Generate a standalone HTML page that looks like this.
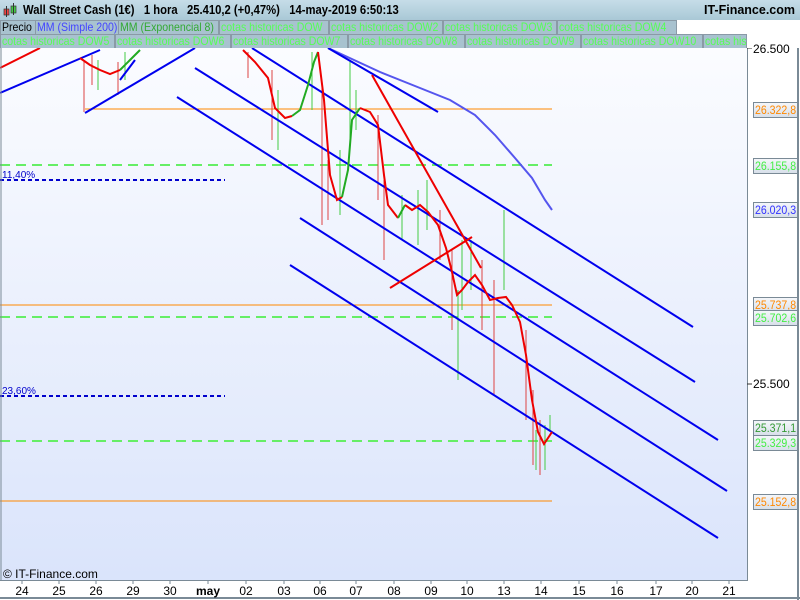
<!DOCTYPE html>
<html><head><meta charset="utf-8"><style>
body{margin:0;width:800px;height:600px;overflow:hidden;font-family:"Liberation Sans",sans-serif;background:#fff;position:relative}
#hdr{position:absolute;left:0;top:0;width:800px;height:20px;background:linear-gradient(#c6dde8,#a9c8d6);font-weight:bold;font-size:12.5px;line-height:20px}
.leg{position:absolute;height:13px;border:1px solid #8a9aa6;background:#a8c2cf;font-size:12px;line-height:13px;padding:0 1px;white-space:nowrap;color:#5f5;overflow:hidden}
.leg span,.pb span{display:inline-block;transform:scaleX(.88);transform-origin:0 0}
#plot{position:absolute;left:0;top:48px;width:747px;height:532px;background:linear-gradient(#fbfcff,#dae4fb);border-right:1px solid #7a8a96;border-bottom:1px solid #7a8a96}
.pb{position:absolute;left:753px;width:42px;height:14px;border:1px solid #7a8a96;background:linear-gradient(#f4f6fa,#d8e0ea);font-size:12px;line-height:14px;padding-left:1px;overflow:hidden;white-space:nowrap}
.xl{position:absolute;top:584px;font-size:12px;transform:translateX(-50%)}
</style></head><body>
<div id="hdr"><svg style="position:absolute;left:3px;top:3px" width="14" height="15"><rect x="1" y="6" width="5" height="6" fill="#e44" stroke="#333" stroke-width=".7"/><line x1="3.5" y1="3" x2="3.5" y2="14" stroke="#333"/><rect x="8" y="3" width="5" height="7" fill="#4c4" stroke="#333" stroke-width=".7"/><line x1="10.5" y1="0" x2="10.5" y2="12" stroke="#333"/></svg><span style="position:absolute;left:23px;transform:scaleX(.9);transform-origin:0 0;white-space:nowrap">Wall Street Cash (1€)&nbsp;&nbsp;&nbsp;1 hora&nbsp;&nbsp;&nbsp;25.410,2 (+0,47%)&nbsp;&nbsp;&nbsp;14-may-2019 6:50:13</span><span style="position:absolute;right:5px">IT-Finance.com</span></div>
<div class="leg" style="left:0;top:20px;color:#000;width:33px"><span>Precio</span></div>
<div class="leg" style="left:35px;top:20px;color:#44f;width:81px"><span>MM (Simple 200)</span></div>
<div class="leg" style="left:118px;top:20px;color:#3a3;width:97px"><span>MM (Exponencial 8)</span></div>
<div class="leg" style="left:219px;top:20px;width:106px"><span>cotas historicas DOW</span></div>
<div class="leg" style="left:329px;top:20px;width:110px"><span>cotas historicas DOW2</span></div>
<div class="leg" style="left:443px;top:20px;width:110px"><span>cotas historicas DOW3</span></div>
<div class="leg" style="left:557px;top:20px;width:116px"><span>cotas historicas DOW4</span></div>
<div class="leg" style="left:0;top:34px;width:111px"><span>cotas historicas DOW5</span></div>
<div class="leg" style="left:115px;top:34px;width:112px"><span>cotas historicas DOW6</span></div>
<div class="leg" style="left:231px;top:34px;width:113px"><span>cotas historicas DOW7</span></div>
<div class="leg" style="left:348px;top:34px;width:113px"><span>cotas historicas DOW8</span></div>
<div class="leg" style="left:465px;top:34px;width:112px"><span>cotas historicas DOW9</span></div>
<div class="leg" style="left:581px;top:34px;width:118px"><span>cotas historicas DOW10</span></div>
<div class="leg" style="left:703px;top:34px;width:40px"><span>cotas his</span></div>
<div id="plot"></div>
<svg style="position:absolute;left:0;top:48px" width="800" height="552" viewBox="0 48 800 552">
<g stroke="#f80" stroke-width="1"><line x1="85" y1="109" x2="552" y2="109"/><line x1="0" y1="305" x2="552" y2="305"/><line x1="0" y1="501" x2="552" y2="501"/></g>
<g stroke="#6e6" stroke-width="2" stroke-dasharray="10,6"><line x1="0" y1="165" x2="552" y2="165"/><line x1="0" y1="317" x2="552" y2="317"/><line x1="0" y1="441" x2="552" y2="441"/></g>
<g stroke="#00c" stroke-width="2" stroke-dasharray="4,3"><line x1="0" y1="180" x2="225" y2="180"/><line x1="0" y1="396" x2="225" y2="396"/></g>
<text x="2" y="178" font-size="10" fill="#00c" font-family="Liberation Sans">11,40%</text>
<text x="2" y="394" font-size="10" fill="#00c" font-family="Liberation Sans">23,60%</text>
<g stroke-width="1">
<g stroke="#d44"><line x1="84" y1="60" x2="84" y2="112"/><line x1="92" y1="55" x2="92" y2="85"/><line x1="118" y1="62" x2="118" y2="95"/><line x1="248" y1="52" x2="248" y2="78"/><line x1="272" y1="70" x2="272" y2="140"/><line x1="322" y1="80" x2="322" y2="225"/><line x1="328" y1="160" x2="328" y2="220"/><line x1="378" y1="115" x2="378" y2="200"/><line x1="384" y1="180" x2="384" y2="260"/><line x1="440" y1="210" x2="440" y2="260"/><line x1="452" y1="250" x2="452" y2="330"/><line x1="482" y1="260" x2="482" y2="330"/><line x1="494" y1="280" x2="494" y2="395"/><line x1="526" y1="330" x2="526" y2="420"/><line x1="533" y1="390" x2="533" y2="465"/><line x1="540" y1="420" x2="540" y2="475"/></g>
<g stroke="#4c4"><line x1="98" y1="60" x2="98" y2="90"/><line x1="125" y1="52" x2="125" y2="80"/><line x1="278" y1="90" x2="278" y2="150"/><line x1="312" y1="52" x2="312" y2="110"/><line x1="340" y1="150" x2="340" y2="215"/><line x1="350" y1="60" x2="350" y2="140"/><line x1="356" y1="90" x2="356" y2="130"/><line x1="402" y1="195" x2="402" y2="240"/><line x1="418" y1="190" x2="418" y2="245"/><line x1="427" y1="180" x2="427" y2="230"/><line x1="458" y1="290" x2="458" y2="380"/><line x1="462" y1="240" x2="462" y2="310"/><line x1="471" y1="240" x2="471" y2="290"/><line x1="504" y1="210" x2="504" y2="290"/><line x1="536" y1="430" x2="536" y2="470"/><line x1="545" y1="425" x2="545" y2="470"/><line x1="550" y1="415" x2="550" y2="430"/></g>
</g>
<polyline fill="none" stroke="#55e" stroke-width="2" points="328,48 380,72 420,88 450,100 475,115 495,135 515,158 532,178 545,200 552,210"/>
<g stroke="#00e" stroke-width="2">
<line x1="0" y1="93" x2="100" y2="50"/><line x1="85" y1="113" x2="195" y2="48"/><line x1="120" y1="80" x2="135" y2="60"/>
<line x1="252" y1="48" x2="693" y2="327"/>
<line x1="195" y1="68" x2="695" y2="382"/>
<line x1="177" y1="97" x2="718" y2="440"/>
<line x1="300" y1="218" x2="727" y2="491"/>
<line x1="290" y1="265" x2="718" y2="538"/>
<line x1="328" y1="48" x2="438" y2="112"/>
</g>
<g stroke="#e00" stroke-width="2" fill="none">
<line x1="0" y1="68" x2="40" y2="48"/>
<line x1="372" y1="75" x2="481" y2="268"/>
<line x1="390" y1="288" x2="472" y2="237"/>
<polyline points="80,58 90,65 100,70 110,74 120,70"/>
<polyline stroke="#2a2" points="120,70 130,60 140,50"/>
<polyline points="243,50 255,62 268,78 275,108 285,118 292,116"/>
<polyline stroke="#2a2" points="292,116 300,110 308,85 314,62 318,52"/>
<polyline points="318,52 324,100 330,175 337,200 342,197"/>
<polyline stroke="#2a2" points="342,197 348,170 352,120 360,108"/>
<polyline points="360,108 370,112 378,125 384,175 388,205 398,218"/>
<polyline stroke="#2a2" points="398,218 405,205"/>
<polyline points="405,205 412,210 420,205 428,212 438,225 446,248 452,272 457,295 462,290 468,282 475,275 482,285 490,300 498,298 506,297 512,305 520,322 526,355 532,400 538,432 544,444 552,432"/>
</g>
<line x1="747" y1="48" x2="752" y2="48" stroke="#333"/>
<line x1="747" y1="384" x2="752" y2="384" stroke="#333"/>
<g stroke="#7a8a96"><line x1="22" y1="580" x2="22" y2="584"/><line x1="59" y1="580" x2="59" y2="584"/><line x1="96" y1="580" x2="96" y2="584"/><line x1="133" y1="580" x2="133" y2="584"/><line x1="170" y1="580" x2="170" y2="584"/><line x1="208" y1="580" x2="208" y2="584"/><line x1="246" y1="580" x2="246" y2="584"/><line x1="284" y1="580" x2="284" y2="584"/><line x1="320" y1="580" x2="320" y2="584"/><line x1="356" y1="580" x2="356" y2="584"/><line x1="394" y1="580" x2="394" y2="584"/><line x1="431" y1="580" x2="431" y2="584"/><line x1="467" y1="580" x2="467" y2="584"/><line x1="504" y1="580" x2="504" y2="584"/><line x1="541" y1="580" x2="541" y2="584"/><line x1="579" y1="580" x2="579" y2="584"/><line x1="617" y1="580" x2="617" y2="584"/><line x1="656" y1="580" x2="656" y2="584"/><line x1="692" y1="580" x2="692" y2="584"/><line x1="729" y1="580" x2="729" y2="584"/></g>
<line x1="0" y1="598" x2="800" y2="598" stroke="#7a8a96" stroke-width="2"/>
<line x1="798" y1="48" x2="798" y2="600" stroke="#7a8a96" stroke-width="2"/>
<line x1="1" y1="48" x2="1" y2="580" stroke="#7a8a96"/>
</svg>
<div style="position:absolute;left:3px;top:567px;font-size:12px">© IT-Finance.com</div>
<div style="position:absolute;left:753px;top:42px;font-size:12px">26.500</div>
<div style="position:absolute;left:753px;top:377px;font-size:12px">25.500</div>
<div class="pb" style="top:102px;color:#f80"><span>26.322,8</span></div>
<div class="pb" style="top:158px;color:#4e4"><span>26.155,8</span></div>
<div class="pb" style="top:202px;color:#33f"><span>26.020,3</span></div>
<div class="pb" style="top:297px;color:#f80"><span>25.737,8</span></div>
<div class="pb" style="top:310px;color:#4e4"><span>25.702,6</span></div>
<div class="pb" style="top:420px;color:#393"><span>25.371,1</span></div>
<div class="pb" style="top:435px;color:#4e4"><span>25.329,3</span></div>
<div class="pb" style="top:494px;color:#f80"><span>25.152,8</span></div>
<div class="xl" style="left:22px">24</div><div class="xl" style="left:59px">25</div><div class="xl" style="left:96px">26</div><div class="xl" style="left:133px">29</div><div class="xl" style="left:170px">30</div><div class="xl" style="left:208px;font-weight:bold">may</div><div class="xl" style="left:246px">02</div><div class="xl" style="left:284px">03</div><div class="xl" style="left:320px">06</div><div class="xl" style="left:356px">07</div><div class="xl" style="left:394px">08</div><div class="xl" style="left:431px">09</div><div class="xl" style="left:467px">10</div><div class="xl" style="left:504px">13</div><div class="xl" style="left:541px">14</div><div class="xl" style="left:579px">15</div><div class="xl" style="left:617px">16</div><div class="xl" style="left:656px">17</div><div class="xl" style="left:692px">20</div><div class="xl" style="left:729px">21</div>
</body></html>
